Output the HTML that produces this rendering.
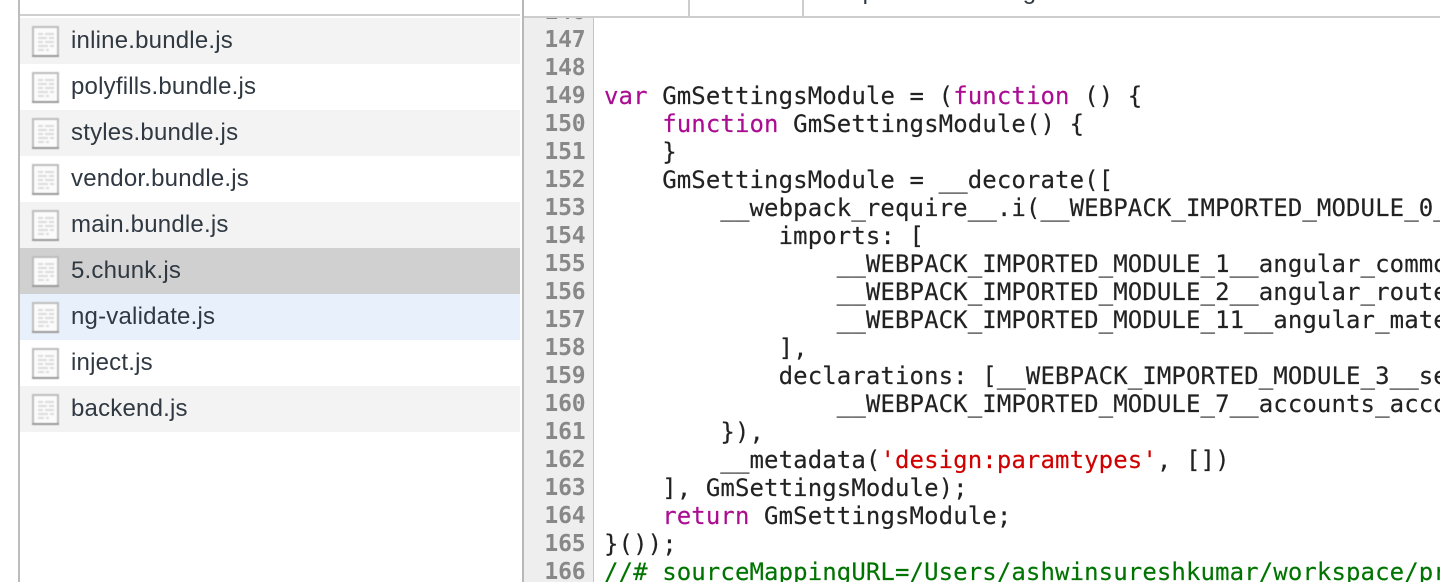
<!DOCTYPE html>
<html><head><meta charset="utf-8">
<style>
html,body{margin:0;padding:0;width:1440px;height:582px;overflow:hidden;background:#fff}
.abs{position:absolute}
#left{left:18px;top:0;width:2px;height:582px;background:#bdbdbd}
.hline{left:20px;top:14px;width:500px;height:2px;background:#cfcfcf}
.row{position:absolute;left:20px;width:500px;height:46px;font:24px/46px "Liberation Sans",sans-serif;color:#303942;white-space:nowrap;letter-spacing:.2px}
.row span{position:absolute;left:51px;top:0}
.row svg{position:absolute;left:12px;top:8px;filter:blur(.5px)}
#right{left:522px;top:0;width:2px;height:582px;background:#b8b8b8}
.tabline{left:524px;top:16px;width:916px;height:2px;background:#cdcdcd}
.tabsep{top:0;width:2px;height:17px;background:#cdcdcd}
.gut{left:524px;top:18px;width:70px;height:564px;background:#eeeeee;border-right:1px solid #c4c4c4;box-sizing:border-box;overflow:hidden}
pre{margin:0;font:24px/28px "DejaVu Sans Mono",monospace;white-space:pre}
#nums{position:absolute;left:0;top:-20px;width:61.5px;text-align:right;color:#888;font-weight:bold;font-size:23px;letter-spacing:-.15px}
#code{left:604px;top:82px;color:#222;width:836px;overflow:hidden;height:500px;letter-spacing:.1px;-webkit-text-stroke:.15px currentColor}
.k{color:#aa0d91}.s{color:#d00000}.c{color:#007400}
.t{top:-22px;font:24px/28px "Liberation Sans",sans-serif;color:#303942;white-space:nowrap}
</style></head>
<body>
<svg width="0" height="0" style="position:absolute"><defs>
<symbol id="f" viewBox="0 0 28 32">
<rect x="0" y="0" width="27" height="31" fill="#bdbdbd"/>
<rect x="0" y="29" width="27" height="2" fill="#9a9a9a"/>
<rect x="2" y="2" width="23" height="27" fill="#fbfbfb"/>
<path d="M6 8h5M13 8h9M6 12h9M17 12h5M6 16h5M13 16h9M6 20h10M18 20h4M6 24h6M14 24h3" stroke="#dcdcdc" stroke-width="2" fill="none"/>
</symbol></defs></svg>

<div class="abs" id="left"></div>
<div class="abs hline"></div>

<div class="row" style="top:18px;background:#f3f3f3"><svg width="28" height="32"><use href="#f"/></svg><span>inline.bundle.js</span></div>
<div class="row" style="top:64px;background:#fff"><svg width="28" height="32"><use href="#f"/></svg><span>polyfills.bundle.js</span></div>
<div class="row" style="top:110px;background:#f3f3f3"><svg width="28" height="32"><use href="#f"/></svg><span>styles.bundle.js</span></div>
<div class="row" style="top:156px;background:#fff"><svg width="28" height="32"><use href="#f"/></svg><span>vendor.bundle.js</span></div>
<div class="row" style="top:202px;background:#f3f3f3"><svg width="28" height="32"><use href="#f"/></svg><span>main.bundle.js</span></div>
<div class="row" style="top:248px;background:#d0d0d0"><svg width="28" height="32"><use href="#f"/></svg><span>5.chunk.js</span></div>
<div class="row" style="top:294px;background:#e8f0fc"><svg width="28" height="32"><use href="#f"/></svg><span>ng-validate.js</span></div>
<div class="row" style="top:340px;background:#fff"><svg width="28" height="32"><use href="#f"/></svg><span>inject.js</span></div>
<div class="row" style="top:386px;background:#f3f3f3"><svg width="28" height="32"><use href="#f"/></svg><span>backend.js</span></div>

<div class="abs" id="right"></div>
<div class="abs t" style="left:596px">Headers</div>
<div class="abs t" style="left:716px">Preview</div>
<div class="abs t" style="left:820px">Response</div>
<div class="abs t" style="left:965px">Timing</div>
<div class="abs tabline"></div>
<div class="abs tabsep" style="left:688px"></div>
<div class="abs tabsep" style="left:802px"></div>

<div class="abs gut"><pre id="nums">146
147
148
149
150
151
152
153
154
155
156
157
158
159
160
161
162
163
164
165
166</pre></div>

<pre class="abs" id="code"><span class="k">var</span> GmSettingsModule = (<span class="k">function</span> () {
    <span class="k">function</span> GmSettingsModule() {
    }
    GmSettingsModule = __decorate([
        __webpack_require__.i(__WEBPACK_IMPORTED_MODULE_0_
            imports: [
                __WEBPACK_IMPORTED_MODULE_1__angular_common
                __WEBPACK_IMPORTED_MODULE_2__angular_router
                __WEBPACK_IMPORTED_MODULE_11__angular_mate
            ],
            declarations: [__WEBPACK_IMPORTED_MODULE_3__se
                __WEBPACK_IMPORTED_MODULE_7__accounts_acco
        }),
        __metadata(<span class="s">'design:paramtypes'</span>, [])
    ], GmSettingsModule);
    <span class="k">return</span> GmSettingsModule;
}());
<span class="c">//# sourceMappingURL=/Users/ashwinsureshkumar/workspace/pr</span></pre>
</body></html>
